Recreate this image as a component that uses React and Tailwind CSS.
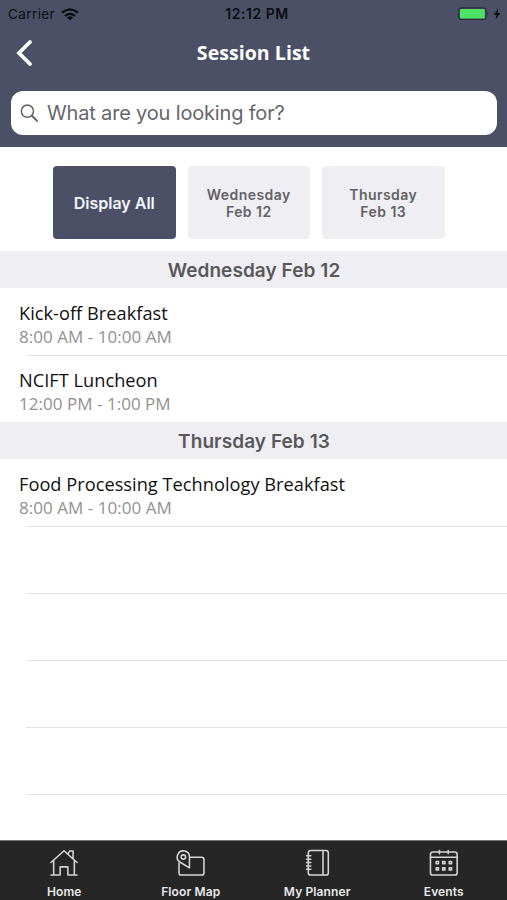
const INTER = "font-['Inter','Liberation_Sans',sans-serif]";
const OPEN = "font-['Open_Sans','Noto_Sans',sans-serif]";

function StatusBar() {
  return (
    <div className="flex h-7 items-center justify-between pl-[8px] pr-[6px] text-black/85">
      <div className="flex w-[120px] items-center gap-[6px]">
        <span className="text-[13.5px] leading-[28px] tracking-[0.4px]">Carrier</span>
        <svg width="18" height="13" viewBox="0 0 18 13" fill="none" stroke="currentColor" strokeWidth="2.2">
          <path d="M1 4.7Q9-2.1 17 4.7" />
          <path d="M4 8Q9 3.7 14 8" />
          <path d="M9 12.4 5.9 9.4Q9 7 12.1 9.4Z" fill="currentColor" stroke="none" />
        </svg>
      </div>
      <span className="pl-[5px] text-[14px] font-semibold leading-[28px] tracking-[0.55px]">12:12 PM</span>
      <div className="flex w-[120px] items-center justify-end gap-[3px]">
        <svg width="32" height="14" viewBox="0 0 32 14">
          <rect x="0.7" y="0.9" width="27.4" height="11.6" rx="2.8" fill="none" stroke="#282c3b" strokeWidth="1.1" />
          <rect x="2" y="2.1" width="24.8" height="9.3" rx="1.2" fill="#4ce264" />
          <path d="M29.4 5Q31.4 6.7 29.4 8.4Z" fill="#282c3b" />
        </svg>
        <svg width="8" height="12" viewBox="0 0 7 12" fill="currentColor">
          <path d="M4.7.3.2 6.7H3L2 11.7 6.8 5H4Z" />
        </svg>
      </div>
    </div>
  );
}

function SectionHeader({ children }) {
  return (
    <h2 className="h-[37px] bg-[#efeef3] pl-px text-center text-[19px] font-semibold leading-[39px] tracking-[0.07px] text-[#58585b]">
      {children}
    </h2>
  );
}

function SessionRow({ title, time, last }) {
  return (
    <li className={`flex h-[67px] flex-col pl-[19px] pt-[12px] ${OPEN}`}>
      <span className="text-[18.2px] leading-[26px] tracking-[0.03px] text-[#111]">{title}</span>
      <span className="text-[17px] leading-[22px] tracking-[0.03px] text-[#919191]">{time}</span>
      {!last && <div className="ml-[6.5px] mt-auto h-px shrink-0 translate-y-px bg-[#e4e4e5]" />}
    </li>
  );
}

function EmptyRow() {
  return (
    <li className="flex h-[67px] flex-col pl-[25.5px]">
      <div className="mt-auto h-px translate-y-px bg-[#e4e4e5]" />
    </li>
  );
}

function Tab({ label, children }) {
  return (
    <button className="flex flex-1 flex-col items-center pt-[8px]">
      <svg width="30" height="30" viewBox="0 0 30 30" fill="none" stroke="#d6d6d6" strokeWidth="1.6" strokeLinecap="round" strokeLinejoin="round">
        {children}
      </svg>
      <span className="mt-[6px] text-[12px] font-semibold leading-[16px] tracking-[0.12px] text-[#e8e8e8]">{label}</span>
    </button>
  );
}

export default function App() {
  return (
    <div className={`flex h-[900px] w-[507px] flex-col overflow-hidden bg-white ${INTER}`}>
      <header className="h-[147px] shrink-0 bg-[#4b5066]">
        <StatusBar />
        <div className="flex h-[50px] items-center pl-[15px] pr-[34px]">
          <svg width="19" height="28" viewBox="0 0 19 28" fill="none" stroke="#fff" strokeWidth="3.8" className="shrink-0">
            <path d="M15 3 4 14 15 25" strokeLinecap="round" />
          </svg>
          <h1 className={`h-[50px] flex-1 text-center text-[19.5px] font-bold leading-[50px] tracking-[0.05px] text-white ${OPEN}`}>Session List</h1>
        </div>
        <div className="ml-[11px] mr-[10px] mt-[13px] flex h-[44px] items-center gap-[8px] rounded-[12px] bg-white pl-[9px]">
          <svg width="19" height="20" viewBox="0 0 19 20" fill="none" stroke="#626267" strokeWidth="1.5">
            <circle cx="7.4" cy="8.2" r="6.1" />
            <path d="m11.9 12.8 5.2 5.1" strokeWidth="2" strokeLinecap="round" />
          </svg>
          <span className="text-[20px] leading-[43px] tracking-[-0.17px] text-[#66666a]">What are you looking for?</span>
        </div>
      </header>

      <div className="flex h-[104px] shrink-0 gap-[12px] pl-[53px] pt-[19px]">
        <button className="h-[73px] w-[122.5px] rounded-[4px] bg-[#4b5066] text-[16px] font-semibold text-[#f4f4fb]">Display All</button>
        <button className="h-[73px] w-[122.5px] rounded-[4px] bg-[#efeef3] text-[14px] font-semibold leading-[17px] tracking-[0.45px] text-[#626266]">
          Wednesday<br />Feb 12
        </button>
        <button className="h-[73px] w-[122.5px] rounded-[4px] bg-[#efeef3] text-[14px] font-semibold leading-[17px] tracking-[0.45px] text-[#626266]">
          Thursday<br />Feb 13
        </button>
      </div>

      <main className="flex-1">
        <SectionHeader>Wednesday Feb 12</SectionHeader>
        <ul>
          <SessionRow title="Kick-off Breakfast" time="8:00 AM - 10:00 AM" />
          <SessionRow title="NCIFT Luncheon" time="12:00 PM - 1:00 PM" last />
        </ul>
        <SectionHeader>Thursday Feb 13</SectionHeader>
        <ul>
          <SessionRow title="Food Processing Technology Breakfast" time="8:00 AM - 10:00 AM" />
          <EmptyRow />
          <EmptyRow />
          <EmptyRow />
          <EmptyRow />
        </ul>
      </main>

      <nav className="flex h-[60px] shrink-0 border-t border-[#777] bg-[#262626] pl-px">
        <Tab label="Home">
          <path d="M1.5 14 15 1.8 28.5 14M1.5 27H10.8M19.2 27H28.5M4.3 12V27M25.7 12V27M11 27V18.5H19V27M19 5 21 2H24.4V9.5" />
        </Tab>
        <Tab label="Floor Map">
          <path d="M14.6 8.5H26Q28.4 8.5 28.4 11V24.5Q28.4 27 26 27H5Q2.6 27 2.6 24.5V14.5" />
          <path d="M13.4 19.5V8.6A6.3 6.3 0 1 0 3.8 13.7Z" />
          <circle cx="7.1" cy="8.4" r="2.3" />
        </Tab>
        <Tab label="My Planner">
          <rect x="6" y="1.5" width="20.7" height="25.5" rx="2.5" />
          <path d="M21.2 1.5V27M4.2 7H8.6M4.2 10.5H8.6M4.2 14H8.6M4.2 17.5H8.6M4.2 21H8.6" />
        </Tab>
        <Tab label="Events">
          <rect x="1" y="3.2" width="27.6" height="23.8" rx="2.5" />
          <path d="M1 8.6H28.6M10.3 1.5V5M19.3 1.5V5" />
          <path d="M6.9 13H9.3V15.2H6.9ZM13.6 13H16V15.2H13.6ZM20.4 13H22.8V15.2H20.4ZM6.9 19.4H9.3V21.6H6.9ZM13.6 19.4H16V21.6H13.6ZM20.4 19.4H22.8V21.6H20.4Z" />
        </Tab>
      </nav>
    </div>
  );
}
